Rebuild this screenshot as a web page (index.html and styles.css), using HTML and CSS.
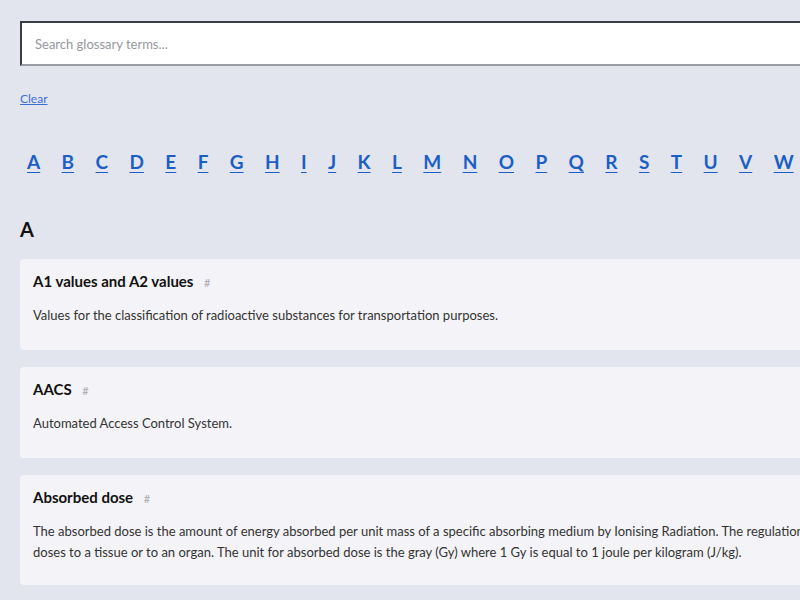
FILE: index.html
```html
<!DOCTYPE html>
<html lang="en">
<head>
<meta charset="utf-8">
<title>Glossary</title>
<link rel="stylesheet" href="styles.css">
</head>
<body>
<div class="page">
  <div class="search">
    <input class="search-input" type="text" placeholder="Search glossary terms...">
  </div>
  <a class="clear" href="#">Clear</a>
  <nav class="alpha">
    <a href="#">A</a><a href="#">B</a><a href="#">C</a><a href="#">D</a><a href="#">E</a><a href="#">F</a><a href="#">G</a><a href="#">H</a><a href="#">I</a><a href="#">J</a><a href="#">K</a><a href="#">L</a><a href="#">M</a><a href="#">N</a><a href="#">O</a><a href="#">P</a><a href="#">Q</a><a href="#">R</a><a href="#">S</a><a href="#">T</a><a href="#">U</a><a href="#">V</a><a href="#">W</a><a href="#">X</a><a href="#">Y</a><a href="#">Z</a>
  </nav>
  <h2 class="letter">A</h2>
  <div class="cards">
    <div class="card">
      <h3 class="term">A1 values and A2 values <span class="hash">#</span></h3>
      <p class="def">Values for the classification of radioactive substances for transportation purposes.</p>
    </div>
    <div class="card">
      <h3 class="term">AACS <span class="hash">#</span></h3>
      <p class="def">Automated Access Control System.</p>
    </div>
    <div class="card">
      <h3 class="term">Absorbed dose <span class="hash">#</span></h3>
      <p class="def">The absorbed dose is the amount of energy absorbed per unit mass of a specific absorbing medium by Ionising Radiation. The regulations limit doses to a tissue or to an organ. The unit for absorbed dose is the gray (Gy) where 1 Gy is equal to 1 joule per kilogram (J/kg).</p>
    </div>
  </div>
</div>
</body>
</html>
```
FILE: styles.css
```css
html {
  overflow: hidden;
}
body {
  margin: 0;
  background: #e3e5ee;
  font-family: Lato, "Liberation Sans", sans-serif;
  color: #222;
}
.page {
  width: 850px;
  padding: 21px 20px 20px;
}
.search-input {
  display: block;
  box-sizing: border-box;
  width: 100%;
  height: 45px;
  border: 2px solid #3a3d46;
  border-bottom-color: #9a9ca4;
  border-right-color: #9a9ca4;
  background: #fff;
  padding: 0 13px;
  font: 13px Lato, "Liberation Sans", sans-serif;
  color: #333;
  outline: none;
}
.search-input::placeholder {
  color: #96979e;
}
.clear {
  display: inline-block;
  margin-top: 25px;
  font-size: 12px;
  color: #3b6fd4;
}
.alpha {
  display: flex;
  gap: 21.4px;
  padding-left: 7px;
  margin-top: 44px;
}
.alpha a {
  font-size: 19px;
  font-weight: 700;
  color: #1b5fc5;
  text-decoration: underline;
  text-underline-offset: 3px;
}
.letter {
  margin: 44px 0 18px;
  font-size: 20px;
  font-weight: 700;
  color: #111;
}
.cards {
  display: flex;
  flex-direction: column;
  gap: 17px;
}
.card {
  background: #f4f3f7;
  border-radius: 4px;
  padding: 13px 13px 22px;
  min-height: 56px;
}
.term {
  margin: 0;
  font-size: 15px;
  font-weight: 700;
  color: #111;
}
.hash {
  margin-left: 7px;
  font-size: 11px;
  font-weight: 400;
  color: #aaa;
}
.def {
  margin: 15px 0 0;
  font-size: 13px;
  line-height: 21px;
  color: #333;
}
```
